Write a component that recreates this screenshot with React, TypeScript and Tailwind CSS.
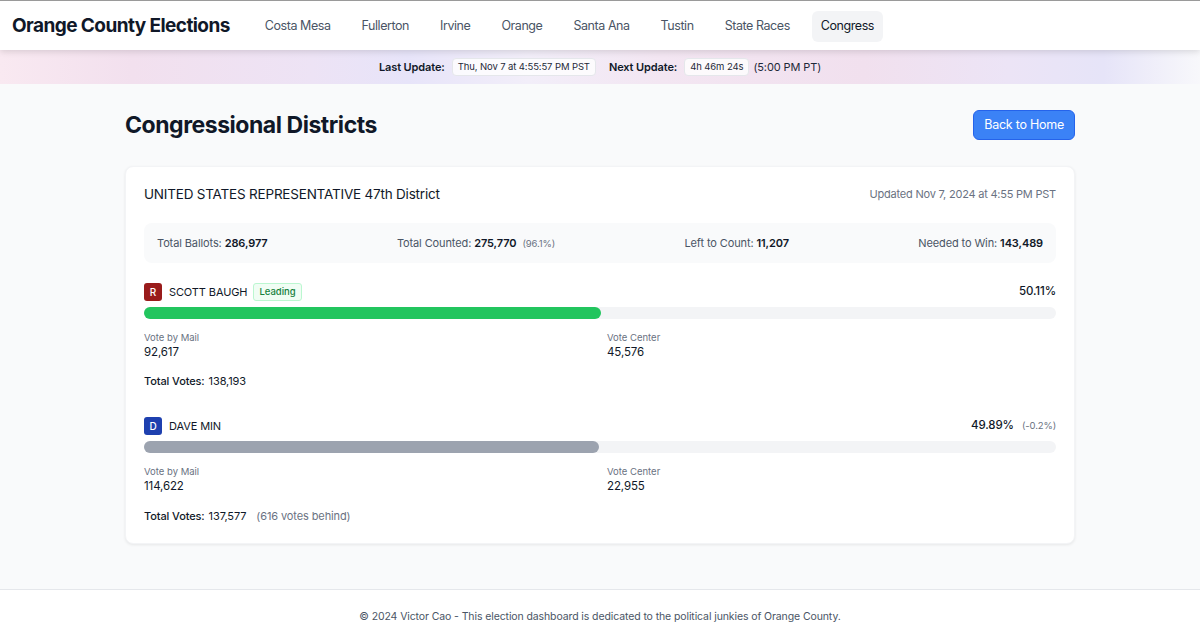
import React from "react";

const navItems = ["Costa Mesa", "Fullerton", "Irvine", "Orange", "Santa Ana", "Tustin", "State Races", "Congress"];

function Candidate(props: {
  letter: string;
  badgeBg: string;
  name: string;
  leading?: boolean;
  pct: number;
  pctText: string;
  diff?: string;
  barColor: string;
  mail: string;
  center: string;
  total: string;
  behind?: string;
  totalGap: string;
}) {
  return (
    <div className="flex flex-col">
      <div className="flex h-[18px] items-center justify-between">
        <div className="flex items-center">
          <div className={`flex h-[18px] w-[18px] items-center justify-center rounded-[3px] text-[10px] font-medium text-white ${props.badgeBg}`}>
            {props.letter}
          </div>
          <span className="ml-[7px] text-[11px] tracking-[-0.01em] text-gray-900">{props.name}</span>
          {props.leading && (
            <span className="ml-[6px] flex h-[18px] items-center rounded-[3px] border border-[#bbf7d0] bg-[#f0fdf4] px-[5px] text-[9.5px] font-medium text-[#15803d]">
              Leading
            </span>
          )}
        </div>
        <div className="flex items-center text-[11.5px] tracking-[-0.01em] text-gray-900">
          <span className="font-medium">{props.pctText}</span>
          {props.diff && <span className="ml-[8px] text-[9.5px] text-gray-500">{props.diff}</span>}
        </div>
      </div>
      <div className="mt-[6px] h-[12px] w-full rounded-full bg-[#f3f4f6]">
        <div className={`h-full rounded-full ${props.barColor}`} style={{ width: `${props.pct}%` }} />
      </div>
      <div className="mt-[13px] grid grid-cols-2 gap-x-[14px]">
        <div className="flex flex-col">
          <span className="text-[9.5px] leading-[12px] text-gray-500">Vote by Mail</span>
          <span className="text-[11.5px] leading-[16px] tracking-[-0.01em] text-gray-900">{props.mail}</span>
        </div>
        <div className="flex flex-col">
          <span className="text-[9.5px] leading-[12px] text-gray-500">Vote Center</span>
          <span className="text-[11.5px] leading-[16px] tracking-[-0.01em] text-gray-900">{props.center}</span>
        </div>
      </div>
      <div className={`${props.totalGap} flex h-[16px] items-center text-[11px] tracking-[-0.01em] text-gray-900`}>
        <span className="font-medium">Total Votes:</span>
        <span className="ml-[4px]">{props.total}</span>
        {props.behind && <span className="ml-[10px] text-gray-500">{props.behind}</span>}
      </div>
    </div>
  );
}

export default function App() {
  return (
    <div
      className="flex min-h-[627px] flex-col bg-[#f9fafb] text-gray-900"
      style={{ fontFamily: "Inter, 'Noto Sans', sans-serif" }}
    >
      <header className="relative z-10 flex h-[50px] items-center border-t border-[#9a9a9a] bg-white px-[12px] pt-[1px] shadow-[0_2px_6px_rgba(0,0,0,0.12)]">
        <h1 className="text-[19px] font-bold tracking-[-0.03em] text-gray-900">Orange County Elections</h1>
        <nav className="ml-[26px] flex items-center gap-[13px]">
          {navItems.map((n) => (
            <a
              key={n}
              className={`flex h-[31px] items-center rounded-md px-[9px] text-[12.5px] tracking-[-0.035em] ${
                n === "Congress" ? "bg-[#f3f4f6] text-gray-900" : "text-gray-600"
              }`}
            >
              {n}
            </a>
          ))}
        </nav>
      </header>

      <div
        className="flex h-[34px] items-center justify-center text-[11px] tracking-[-0.01em]"
        style={{
          background:
            "linear-gradient(90deg, #f9e9f1 0%, #f2e0ee 11%, #ede3f5 26%, #e7e4f9 34%, #f2eef9 44%, #f3e6f2 55%, #f1e0ee 72%, #ece4f6 84%, #e6e4f8 92%, #f8f8fb 100%)",
        }}
      >
        <span className="font-semibold text-gray-900">Last Update:</span>
        <span className="ml-[7px] flex h-[18px] items-center rounded-[4px] border border-gray-200 bg-white/80 px-[5px] text-[9.5px] text-gray-800">
          Thu, Nov 7 at 4:55:57 PM PST
        </span>
        <span className="ml-[13px] font-semibold text-gray-900">Next Update:</span>
        <span className="ml-[7px] flex h-[18px] items-center rounded-[4px] border border-gray-200 bg-white/80 px-[5px] text-[9.5px] text-gray-800">
          4h 46m 24s
        </span>
        <span className="ml-[4px] text-gray-800">(5:00 PM PT)</span>
      </div>

      <main className="mx-auto w-[950px] pb-[45px] pt-[26px]">
        <div className="flex h-[30px] items-center justify-between">
          <h2 className="text-[23px] font-bold tracking-[-0.02em] text-gray-900">Congressional Districts</h2>
          <button className="flex h-[30px] items-center rounded-md border border-[#2563eb] bg-[#3b82f6] px-[10px] text-[12.5px] tracking-[-0.02em] text-white">
            Back to Home
          </button>
        </div>

        <section className="mt-[26px] rounded-lg border border-gray-100 bg-white px-[18px] pb-[19px] pt-[17px] shadow-[0_1px_3px_rgba(0,0,0,0.08)]">
          <div className="flex h-[20px] items-center justify-between">
            <h3 className="text-[13.5px] tracking-[-0.015em] text-gray-900">UNITED STATES REPRESENTATIVE 47th District</h3>
            <span className="text-[11px] tracking-[-0.02em] text-gray-500">Updated Nov 7, 2024 at 4:55 PM PST</span>
          </div>

          <div className="mt-[19px] flex h-[40px] items-center justify-between rounded-lg bg-[#f9fafb] px-[13px] text-[11px] tracking-[-0.01em] text-gray-600">
            <span>
              Total Ballots: <b className="font-semibold text-gray-900">286,977</b>
            </span>
            <span>
              Total Counted: <b className="font-semibold text-gray-900">275,770</b>
              <span className="ml-[6px] text-[9.5px] text-gray-500">(96.1%)</span>
            </span>
            <span>
              Left to Count: <b className="font-semibold text-gray-900">11,207</b>
            </span>
            <span>
              Needed to Win: <b className="font-semibold text-gray-900">143,489</b>
            </span>
          </div>

          <div className="mt-[20px] flex flex-col gap-[28px]">
            <Candidate
              letter="R"
              badgeBg="bg-[#991b1b]"
              name="SCOTT BAUGH"
              leading
              pct={50.11}
              pctText="50.11%"
              barColor="bg-[#22c55e]"
              mail="92,617"
              center="45,576"
              total="138,193"
              totalGap="mt-[13px]"
            />
            <Candidate
              letter="D"
              badgeBg="bg-[#1e40af]"
              name="DAVE MIN"
              pct={49.89}
              pctText="49.89%"
              diff="(-0.2%)"
              barColor="bg-[#9ca3af]"
              mail="114,622"
              center="22,955"
              total="137,577"
              behind="(616 votes behind)"
              totalGap="mt-[14px]"
            />
          </div>
        </section>
      </main>

      <footer className="mt-auto border-t border-gray-200 bg-white pb-[10px] pt-[19px] text-center text-[10.5px] tracking-[-0.01em] text-gray-600">
        © 2024 Victor Cao - This election dashboard is dedicated to the political junkies of Orange County.
      </footer>
    </div>
  );
}
